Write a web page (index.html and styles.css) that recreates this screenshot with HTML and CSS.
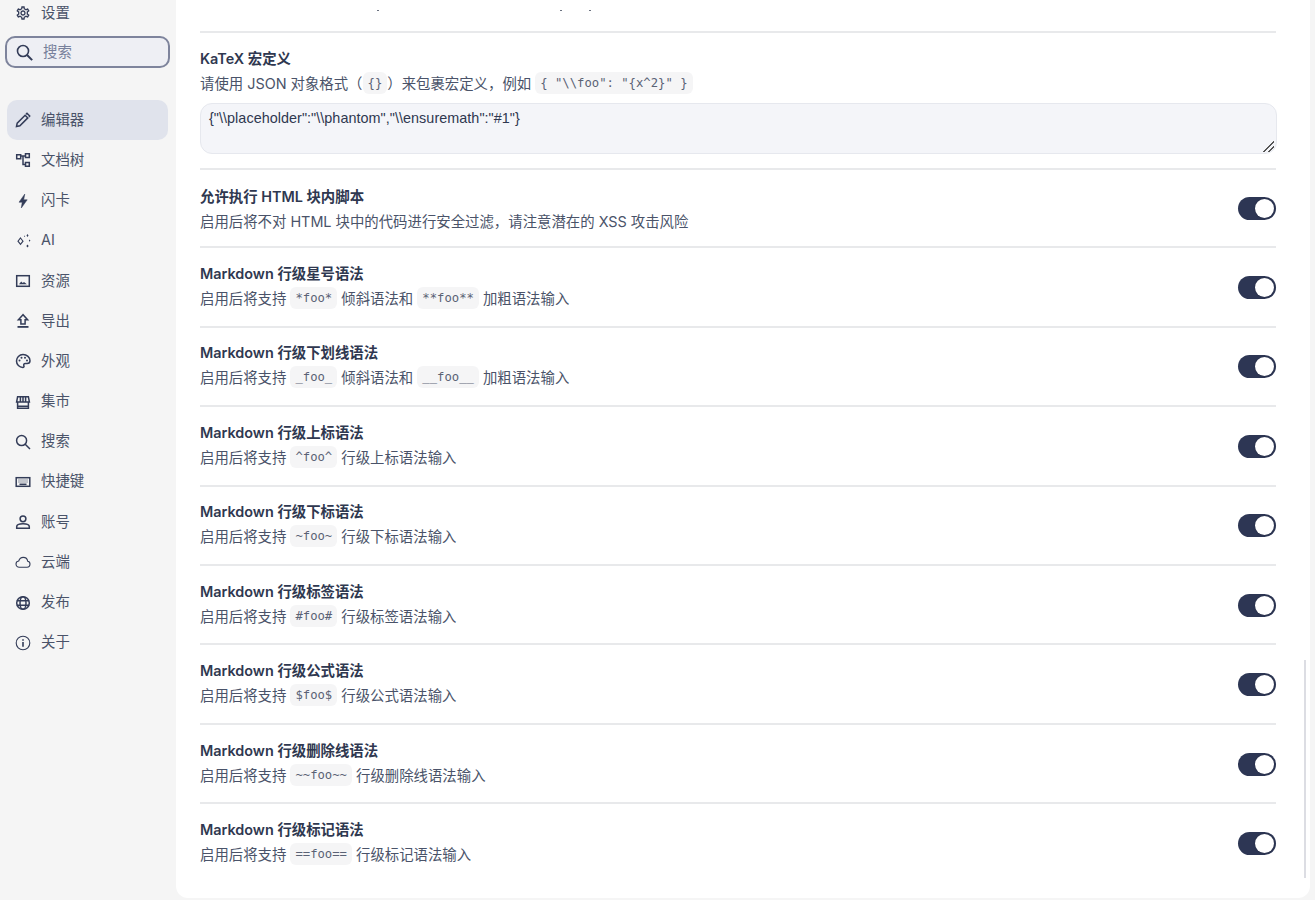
FILE: index.html
```html
<!DOCTYPE html>
<html lang="zh">
<head>
<meta charset="utf-8">
<title>设置</title>
<link rel="stylesheet" href="styles.css">
</head>
<body>
<div class="app">
  <aside class="sidebar">
    <a class="nav-item"><svg class="icon" viewBox="0 0 24 24"><path class="fill" d="M19.43 12.98c.04-.32.07-.64.07-.98 0-.34-.03-.66-.07-.98l2.11-1.65c.19-.15.24-.42.12-.64l-2-3.46c-.09-.16-.26-.25-.44-.25-.06 0-.12.01-.17.03l-2.49 1c-.52-.4-1.08-.73-1.69-.98l-.38-2.65C14.46 2.18 14.25 2 14 2h-4c-.25 0-.46.18-.49.42l-.38 2.65c-.61.25-1.17.59-1.69.98l-2.49-1c-.06-.02-.12-.03-.18-.03-.17 0-.34.09-.43.25l-2 3.46c-.13.22-.07.49.12.64l2.11 1.65c-.04.32-.07.65-.07.98 0 .33.03.66.07.98l-2.11 1.65c-.19.15-.24.42-.12.64l2 3.46c.09.16.26.25.44.25.06 0 .12-.01.17-.03l2.49-1c.52.4 1.08.73 1.69.98l.38 2.65c.03.24.24.42.49.42h4c.25 0 .46-.18.49-.42l.38-2.65c.61-.25 1.17-.59 1.69-.98l2.49 1c.06.02.12.03.18.03.17 0 .34-.09.43-.25l2-3.46c.12-.22.07-.49-.12-.64l-2.11-1.65zm-1.98-1.71c.04.31.05.52.05.73 0 .21-.02.43-.05.73l-.14 1.13.89.7 1.08.84-.7 1.21-1.27-.51-1.04-.42-.9.68c-.43.32-.84.56-1.25.73l-1.06.43-.16 1.13-.2 1.35h-1.4l-.19-1.35-.16-1.13-1.06-.43c-.43-.18-.83-.41-1.23-.71l-.91-.7-1.06.43-1.27.51-.7-1.21 1.08-.84.89-.7-.14-1.13c-.03-.31-.05-.54-.05-.74s.02-.43.05-.73l.14-1.13-.89-.7-1.08-.84.7-1.21 1.27.51 1.04.42.9-.68c.43-.32.84-.56 1.25-.73l1.06-.43.16-1.13.2-1.35h1.39l.19 1.35.16 1.13 1.06.43c.43.18.83.41 1.23.71l.91.7 1.06-.43 1.27-.51.7 1.21-1.07.85-.89.7.14 1.13zM12 8c-2.21 0-4 1.79-4 4s1.79 4 4 4 4-1.79 4-4-1.79-4-4-4zm0 6c-1.1 0-2-.9-2-2s.9-2 2-2 2 .9 2 2-.9 2-2 2z"/></svg><span>设置</span></a>
    <label class="search">
      <svg class="icon search-icon" viewBox="0 0 16 16"><circle class="line" cx="6.600" cy="6.600" r="5.200"/><path class="line bold" d="M10.400 10.400l4.800 4.800"/></svg>
      <span class="search-text">搜索</span>
    </label>
    <nav class="nav">
      <a class="nav-item active"><svg class="icon" viewBox="0 0 16 16"><path class="line" d="M1.500 14.500l.7-3.400 7.900-7.900 2.700 2.700-7.900 7.900zM11 2.300l1-1 2.700 2.700-1 1"/></svg><span>编辑器</span></a>
      <a class="nav-item"><svg class="icon" viewBox="0 0 16 16"><path class="line" d="M1.700 2.700h4v4h-4zM10.500 1.700h3.800v3.800h-3.800zM10.500 10.500h3.800v3.800h-3.800zM5.700 4h4.800M8 4v8.400h2.500"/></svg><span>文档树</span></a>
      <a class="nav-item"><svg class="icon" viewBox="0 0 16 16"><path class="fill heavy" d="M9.800 1L4 9.200h3.200L6.300 15 12.200 6.800H8.700z"/></svg><span>闪卡</span></a>
      <a class="nav-item"><svg class="icon" viewBox="0 0 16 16"><path class="line thin" d="M5.500 5l2.500 3.200-2.500 3.200L3 8.200z"/><path class="fill" d="M12.500 1l1 1.500-1 1.500-1-1.500zM12.500 11.500l1.200 1.500-1.200 1.500-1.200-1.500zM14.600 6.500l.8 1.100-.8 1.100-.8-1.100zM9.600 2.500l.6.8-.6.8-.6-.8z"/></svg><span>AI</span></a>
      <a class="nav-item"><svg class="icon" viewBox="0 0 16 16"><rect class="line" x="1.700" y="2.700" width="12.600" height="10.600"/><path class="fill" d="M4 11.200l2.200-2.700 1.500 1.600 1.300-1.200 2.900 2.300z"/></svg><span>资源</span></a>
      <a class="nav-item"><svg class="icon" viewBox="0 0 16 16"><path class="line" d="M8 1.700L3.400 6.800h2.500v4.300h4.200V6.800h2.500z"/><path class="fill" d="M2.500 13h11v1.800h-11z"/></svg><span>导出</span></a>
      <a class="nav-item"><svg class="icon" viewBox="0 0 16 16"><path class="line" d="M8 1.600C4.300 1.600 1.500 4.400 1.500 8c0 3.500 2.900 6.400 6.300 6.400 1.100 0 1.500-.8 1.100-1.600-.6-1.100.1-2.300 1.400-2.300h1.700c1.600 0 3-1.100 3-2.800 0-3.400-3.100-6.100-7-6.100z"/><circle class="fill" cx="4.500" cy="7.500" r="1"/><circle class="fill" cx="6.500" cy="4.700" r="1"/><circle class="fill" cx="10" cy="4.700" r="1"/><circle class="fill" cx="12" cy="7.500" r="1"/></svg><span>外观</span></a>
      <a class="nav-item"><svg class="icon" viewBox="0 0 16 16"><path class="line" d="M2.600 2.800h10.800l1 5.200H1.600zM5.400 2.800V8M8 2.800V8M10.600 2.800V8M2.600 8v6.200h10.800V8M2.600 12.200h10.800"/></svg><span>集市</span></a>
      <a class="nav-item"><svg class="icon" viewBox="0 0 16 16"><circle class="line" cx="6.600" cy="6.600" r="5"/><path class="line" d="M10.200 10.200l4.800 4.800"/></svg><span>搜索</span></a>
      <a class="nav-item"><svg class="icon" viewBox="0 0 16 16"><rect class="line" x="1.200" y="3.700" width="13.600" height="8.600"/><path class="line dashed" d="M3.500 6h9M3.500 8h9"/><path class="line" d="M4.500 10.300h7"/></svg><span>快捷键</span></a>
      <a class="nav-item"><svg class="icon" viewBox="0 0 16 16"><circle class="line" cx="8" cy="4.800" r="2.900"/><path class="line" d="M1.700 14.300v-1.500c0-2 3.400-3 6.300-3s6.300 1 6.300 3v1.500z"/></svg><span>账号</span></a>
      <a class="nav-item"><svg class="icon" viewBox="0 0 16 16"><path class="line thin" d="M4.200 13.200C2.500 13.200 1 11.800 1 10.100c0-1.600 1.200-2.900 2.700-3.100C4.400 5 6.100 3.400 8.200 3.400c2.300 0 4.200 1.700 4.500 3.900 1.300.2 2.300 1.400 2.300 2.800 0 1.700-1.300 3.100-3 3.100z"/></svg><span>云端</span></a>
      <a class="nav-item"><svg class="icon" viewBox="0 0 16 16"><circle class="line" cx="8" cy="8" r="6.300"/><ellipse class="line" cx="8" cy="8" rx="3" ry="6.300"/><path class="line" d="M1.800 5.800h12.400M1.800 10.200h12.400"/></svg><span>发布</span></a>
      <a class="nav-item"><svg class="icon" viewBox="0 0 16 16"><circle class="line thin" cx="8" cy="8" r="6.800"/><path class="fill" d="M7.200 7h1.600v4.800H7.200zM7.200 4.200h1.600v1.600H7.200z"/></svg><span>关于</span></a>
    </nav>
  </aside>

  <main class="main">
    <div class="content">
      <div class="frag"><i class="dot d1"></i><i class="dot d2"></i><i class="dot d3"></i></div>
      <section class="row block">
        <div class="title">KaTeX 宏定义</div>
        <div class="desc">请使用 JSON 对象格式（<code>{}</code>）来包裹宏定义，例如 <code>{ "\\foo": "{x^2}" }</code></div>
        <textarea class="macro" spellcheck="false">{"\\placeholder":"\\phantom","\\ensuremath":"#1"}</textarea>
      </section>
      <section class="row plain">
        <div class="text"><div class="title">允许执行 HTML 块内脚本</div><div class="desc">启用后将不对 HTML 块中的代码进行安全过滤，请注意潜在的 XSS 攻击风险</div></div>
        <div class="toggle"></div>
      </section>
      <section class="row">
        <div class="text"><div class="title">Markdown 行级星号语法</div><div class="desc">启用后将支持 <code>*foo*</code> 倾斜语法和 <code>**foo**</code> 加粗语法输入</div></div>
        <div class="toggle"></div>
      </section>
      <section class="row">
        <div class="text"><div class="title">Markdown 行级下划线语法</div><div class="desc">启用后将支持 <code>_foo_</code> 倾斜语法和 <code>__foo__</code> 加粗语法输入</div></div>
        <div class="toggle"></div>
      </section>
      <section class="row">
        <div class="text"><div class="title">Markdown 行级上标语法</div><div class="desc">启用后将支持 <code>^foo^</code> 行级上标语法输入</div></div>
        <div class="toggle"></div>
      </section>
      <section class="row">
        <div class="text"><div class="title">Markdown 行级下标语法</div><div class="desc">启用后将支持 <code>~foo~</code> 行级下标语法输入</div></div>
        <div class="toggle"></div>
      </section>
      <section class="row">
        <div class="text"><div class="title">Markdown 行级标签语法</div><div class="desc">启用后将支持 <code>#foo#</code> 行级标签语法输入</div></div>
        <div class="toggle"></div>
      </section>
      <section class="row">
        <div class="text"><div class="title">Markdown 行级公式语法</div><div class="desc">启用后将支持 <code>$foo$</code> 行级公式语法输入</div></div>
        <div class="toggle"></div>
      </section>
      <section class="row">
        <div class="text"><div class="title">Markdown 行级删除线语法</div><div class="desc">启用后将支持 <code>~~foo~~</code> 行级删除线语法输入</div></div>
        <div class="toggle"></div>
      </section>
      <section class="row last">
        <div class="text"><div class="title">Markdown 行级标记语法</div><div class="desc">启用后将支持 <code>==foo==</code> 行级标记语法输入</div></div>
        <div class="toggle"></div>
      </section>
    </div>
    <div class="scrollbar"></div>
  </main>
</div>
</body>
</html>
```
FILE: styles.css
```css
* { box-sizing: border-box; }
html, body { margin: 0; height: 100%; overflow: hidden; }
body {
  background: #f5f5f5;
  color: #2f3850;
  font: 14.4px/23px Inter, "Noto Sans CJK SC", sans-serif;
}
.app { display: flex; height: 900px; padding-bottom: 2px; }

.sidebar {
  width: 176px;
  flex: none;
  margin-top: -7px;
  padding: 0 8px 0 7px;
  display: flex;
  flex-direction: column;
}
.nav-item {
  display: flex;
  align-items: center;
  gap: 10px;
  height: 40.2px;
  flex: none;
  padding-left: 8px;
  border-radius: 10px;
  color: #4a5369;
}
.nav-item span { margin-top: -2px; }
.nav-item.active { background: #e0e3ec; }
.icon { width: 16px; height: 16px; flex: none; }
.fill { fill: #333c58; }
.heavy { stroke: #333c58; stroke-width: .5; }
.line { fill: none; stroke: #333c58; stroke-width: 1.5; }
.thin { stroke-width: 1.1; }
.bold { stroke-width: 1.9; }
.dashed { stroke-dasharray: 1 1; stroke-width: 1.2; }
.search {
  display: flex;
  align-items: center;
  gap: 10px;
  width: 165px;
  height: 32px;
  margin: 3px 0 32px -2px;
  padding-left: 9px;
  border: 2px solid #7e849c;
  border-radius: 10px;
  background: #eeeff4;
  flex: none;
}
.search-text { color: #77809b; margin-top: -2px; }
.search-icon { width: 17px; height: 17px; }

.nav { display: flex; flex-direction: column; }

.main {
  flex: 1;
  margin-right: 5px;
  background: #fff;
  border-radius: 0 0 12px 12px;
  padding: 0 34px 0 24px;
  position: relative;
  overflow: hidden;
  display: flex;
  flex-direction: column;
  justify-content: flex-end;
}
.content { flex: none; }
.frag { position: relative; height: 2px; margin-bottom: 19px; }
.dot { position: absolute; top: 0; width: 2px; height: 1px; background: #6b7280; }
.d1 { left: 177px; }
.d2 { left: 360px; }
.d3 { left: 389px; }

.row {
  display: flex;
  align-items: center;
  justify-content: space-between;
  padding: 13.72px 0 15.72px;
  border-top: 2px solid #e8e9eb;
}
.row.plain { padding: 14.72px 0 13.72px; }
.row.block { display: block; padding: 14px 0 13.5px; }
.row.last { padding-bottom: 32px; }
.text { min-width: 0; }
.title {
  font-weight: 600;
  color: #2f3850;
  height: 23px;
}
.desc {
  margin-top: 2px;
  height: 23px;
  color: #4a5369;
  white-space: nowrap;
}
code {
  display: inline-block;
  height: 22px;
  line-height: 22px;
  vertical-align: top;
  padding: 0 5px;
  border-radius: 6px;
  background: #f5f5f6;
  color: #5a6275;
  font-family: "DejaVu Sans Mono", monospace;
  font-size: 12.24px;
}
.macro {
  display: block;
  width: calc(100% + 1px);
  height: 51px;
  margin-top: 8px;
  padding: 4px 8px;
  border: 1px solid #e6e8ee;
  border-radius: 12px;
  background: #f4f5f9;
  color: #2f3850;
  font: 14.4px/20px "Liberation Sans", Arial, sans-serif;
  letter-spacing: .04px;
  outline: none;
  resize: vertical;
}
.macro::-webkit-resizer {
  background:
    linear-gradient(135deg, transparent 47%, #555 47%, #555 57%, transparent 57%, transparent 70%, #555 70%, #555 80%, transparent 80%) right 2px bottom 1px / 11px 11px no-repeat;
}
.toggle {
  position: relative;
  width: 38px;
  height: 23px;
  flex: none;
  margin-top: 3px;
  border-radius: 12px;
  background: #2d3654;
}
.plain .toggle { margin-top: -1px; }
.toggle::after {
  content: "";
  position: absolute;
  top: 2px;
  right: 2px;
  width: 19px;
  height: 19px;
  border-radius: 50%;
  background: #fff;
  box-shadow: 0 0 2px rgba(0,0,0,.25);
}
.scrollbar {
  position: absolute;
  right: 4px;
  bottom: 20px;
  width: 2px;
  height: 218px;
  background: #dcdde3;
}
```
